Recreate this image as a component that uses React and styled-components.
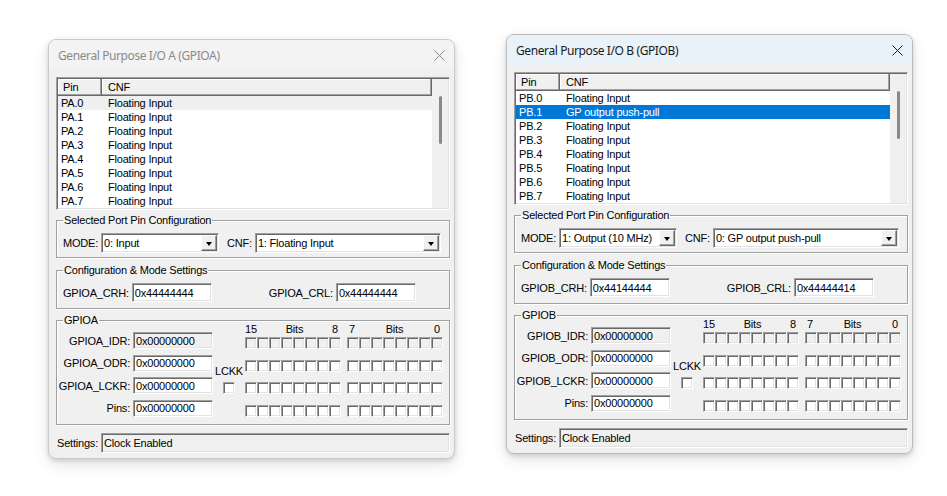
import React from 'react';
import styled, { createGlobalStyle, css } from 'styled-components';

const GlobalStyle = createGlobalStyle`
  html, body {
    margin: 0;
    padding: 0;
    background: #ffffff;
  }
  body {
    width: 947px;
    height: 496px;
    overflow: hidden;
  }
`;

const sunken = css`
  border: 1px solid;
  border-color: #a0a0a0 #ffffff #ffffff #a0a0a0;
  box-shadow: inset 1px 1px 0 #696969, inset -1px -1px 0 #e3e3e3;
`;

const Desktop = styled.div`
  position: relative;
  width: 947px;
  height: 496px;
  background: #ffffff;
  font-family: 'Liberation Sans', Arial, sans-serif;
  font-size: 11px;
  letter-spacing: -0.2px;
  color: #000000;
`;

const Window = styled.div`
  position: absolute;
  left: ${props => props.$x}px;
  top: ${props => props.$y}px;
  width: 407px;
  height: 420px;
  box-sizing: border-box;
  border: 1px solid ${props => (props.$active ? '#bcbcbc' : '#cacaca')};
  border-radius: 8px;
  overflow: hidden;
  background: #f0f0f0;
  display: flex;
  flex-direction: column;
  box-shadow: 0 2px 5px rgba(0, 0, 0, 0.14), 0 6px 16px rgba(0, 0, 0, 0.1);
`;

const TitleBar = styled.div`
  height: 30px;
  flex: none;
  display: flex;
  align-items: center;
  padding-left: 9px;
  background: ${props => (props.$active ? '#e8f2f8' : '#f3f3f3')};
  color: ${props => (props.$active ? '#1b1b1b' : '#8a8a8a')};
`;

const Title = styled.div`
  flex: 1;
  font-family: 'Segoe UI', 'Noto Sans', sans-serif;
  font-size: 12px;
  letter-spacing: -0.4px;
  white-space: nowrap;
`;

const CloseButton = styled.div`
  width: 30px;
  height: 30px;
  display: flex;
  align-items: center;
  justify-content: center;
  color: ${props => (props.$active ? '#1b1b1b' : '#8a8a8a')};
`;

const Client = styled.div`
  flex: 1;
  display: flex;
  flex-direction: column;
  padding: 7px 4px 0 7px;
`;

const ListView = styled.div`
  box-sizing: border-box;
  height: 133px;
  flex: none;
  display: flex;
  background: #ffffff;
  overflow: hidden;
  ${sunken}
  padding: 1px;
`;

const ListMain = styled.div`
  flex: 1;
  display: flex;
  flex-direction: column;
  overflow: hidden;
`;

const ListHeader = styled.div`
  display: flex;
  height: 17px;
  flex: none;
  background: #f0f0f0;
`;

const HeaderCell = styled.div`
  box-sizing: border-box;
  width: ${props => (props.$w ? `${props.$w}px` : 'auto')};
  flex: ${props => (props.$w ? 'none' : '1')};
  padding-left: ${props => props.$pl}px;
  display: flex;
  align-items: center;
  border-right: 1px solid #696969;
  border-bottom: 1px solid #696969;
  box-shadow: inset -1px -1px 0 #a0a0a0, inset 1px 1px 0 #ffffff;
`;

const ListRow = styled.div`
  display: flex;
  align-items: center;
  height: 14px;
  flex: none;
  padding-left: 3px;
  white-space: nowrap;
  ${props =>
    props.$sel === 'focus' &&
    css`
      background: #0078d7;
      color: #ffffff;
    `}
  ${props =>
    props.$sel === 'dim' &&
    css`
      background: #efefef;
    `}
  &:first-of-type {
    margin-top: 2px;
  }
`;

const PinCell = styled.span`
  width: 47px;
  flex: none;
`;

const ScrollBar = styled.div`
  width: 16px;
  flex: none;
  background: #f0f0f0;
  display: flex;
  justify-content: center;
  padding-top: 17px;
`;

const Thumb = styled.div`
  width: 3px;
  height: 48px;
  border-radius: 2px;
  background: #8a8a8a;
`;

const GroupBox = styled.fieldset`
  margin: ${props => props.$mt}px 0 0 0;
  padding: ${props => props.$pad};
  border: 1px solid #a0a0a0;
  box-shadow: inset 1px 1px 0 #ffffff, 1px 1px 0 #ffffff;
  min-width: 0;
`;

const Legend = styled.legend`
  padding: 0 1px;
  font-size: 11px;
  line-height: 13px;
`;

const FieldRow = styled.div`
  display: flex;
  align-items: center;
  gap: ${props => props.$gap || 0}px;
`;

const Label = styled.span`
  white-space: nowrap;
  margin-right: 3px;
  margin-left: ${props => props.$ml || 0}px;
`;

const Combo = styled.div`
  box-sizing: border-box;
  height: 20px;
  width: ${props => (props.$w ? `${props.$w}px` : 'auto')};
  flex: ${props => (props.$w ? 'none' : '1')};
  display: flex;
  align-items: center;
  background: #ffffff;
  ${sunken}
  padding: 1px 1px 1px 2px;
`;

const ComboText = styled.span`
  flex: 1;
  white-space: nowrap;
  overflow: hidden;
`;

const DropButton = styled.div`
  box-sizing: border-box;
  width: 16px;
  height: 16px;
  flex: none;
  background: #f0f0f0;
  border: 1px solid;
  border-color: #ffffff #696969 #696969 #ffffff;
  box-shadow: inset -1px -1px 0 #a0a0a0;
  display: flex;
  align-items: center;
  justify-content: center;
  &::after {
    content: '';
    margin-top: 1px;
    border-left: 3.5px solid transparent;
    border-right: 3.5px solid transparent;
    border-top: 4px solid #000000;
  }
`;

const Edit = styled.div`
  box-sizing: border-box;
  width: 80px;
  height: ${props => props.$h || 19}px;
  flex: none;
  display: flex;
  align-items: center;
  padding-left: 2px;
  white-space: nowrap;
  background: ${props => (props.$readOnly ? '#f0f0f0' : '#ffffff')};
  ${sunken}
`;

const PortBody = styled.div`
  display: flex;
  margin: -5px 0 0 -5px;
`;

const RegColumn = styled.div`
  display: flex;
  flex-direction: column;
  gap: 5.5px;
  padding-top: 10px;
`;

const RegLabel = styled.span`
  width: 72px;
  text-align: right;
  padding-right: 3px;
  white-space: nowrap;
`;

const LockColumn = styled.div`
  width: 33px;
  display: flex;
  flex-direction: column;
  align-items: center;
  padding-top: 43px;
  gap: 4px;
`;

const LockText = styled.span`
  line-height: 13px;
`;

const BitGroups = styled.div`
  display: flex;
  gap: 6px;
`;

const BitGroup = styled.div`
  display: flex;
  flex-direction: column;
  gap: 10.5px;
  width: 96px;
`;

const BitHeader = styled.div`
  height: 15px;
  margin-bottom: -10.5px;
  display: flex;
  justify-content: space-between;
  align-items: center;
  padding: 0 3px 0 ${props => props.$pl}px;
  line-height: 13px;
`;

const BitRow = styled.div`
  display: flex;
`;

const Box = styled.div`
  box-sizing: border-box;
  width: 12px;
  height: 12px;
  flex: none;
  background: ${props => (props.$readOnly ? '#f0f0f0' : '#ffffff')};
  ${sunken}
`;

const StatusRow = styled.div`
  display: flex;
  align-items: center;
  margin-top: 8px;
  padding-left: 1px;
`;

const StatusField = styled.div`
  box-sizing: border-box;
  flex: 1;
  height: 20px;
  display: flex;
  align-items: center;
  padding-left: 2px;
  ${sunken}
`;

function BitBoxes({ readOnly }) {
  return (
    <BitRow>
      {Array.from({ length: 8 }, (_, i) => (
        <Box key={i} $readOnly={readOnly} />
      ))}
    </BitRow>
  );
}

function Dialog({ port, x, y, active, pins, selected, mode, cnf, crh, crl }) {
  const name = `GPIO${port}`;
  const regs = [
    { label: `${name}_IDR:`, readOnly: true },
    { label: `${name}_ODR:` },
    { label: `${name}_LCKR:` },
    { label: 'Pins:' },
  ];

  return (
    <Window $x={x} $y={y} $active={active}>
      <TitleBar $active={active}>
        <Title>
          General Purpose I/O {port} ({name})
        </Title>
        <CloseButton $active={active}>
          <svg width="11" height="11" viewBox="0 0 11 11">
            <path d="M0.5 0.5 L10.5 10.5 M10.5 0.5 L0.5 10.5" stroke="currentColor" strokeWidth="1" fill="none" />
          </svg>
        </CloseButton>
      </TitleBar>
      <Client>
        <ListView>
          <ListMain>
            <ListHeader>
              <HeaderCell $w={44} $pl={5}>
                Pin
              </HeaderCell>
              <HeaderCell $pl={6}>CNF</HeaderCell>
            </ListHeader>
            {pins.map((text, i) => (
              <ListRow key={i} $sel={i === selected ? (active ? 'focus' : 'dim') : null}>
                <PinCell>
                  P{port}.{i}
                </PinCell>
                <span>{text}</span>
              </ListRow>
            ))}
          </ListMain>
          <ScrollBar>
            <Thumb />
          </ScrollBar>
        </ListView>

        <GroupBox $mt={4} $pad="6px 8px 4px 6px">
          <Legend>Selected Port Pin Configuration</Legend>
          <FieldRow>
            <Label>MODE:</Label>
            <Combo $w={118}>
              <ComboText>{mode}</ComboText>
              <DropButton />
            </Combo>
            <Label $ml={8}>CNF:</Label>
            <Combo>
              <ComboText>{cnf}</ComboText>
              <DropButton />
            </Combo>
          </FieldRow>
        </GroupBox>

        <GroupBox $mt={6} $pad="6px 8px 6px 6px">
          <Legend>Configuration &amp; Mode Settings</Legend>
          <FieldRow>
            <Label>{name}_CRH:</Label>
            <Edit>{crh}</Edit>
            <Label $ml={57}>{name}_CRL:</Label>
            <Edit>{crl}</Edit>
          </FieldRow>
        </GroupBox>

        <GroupBox $mt={5} $pad="0 6px 7px 6px">
          <Legend>{name}</Legend>
          <PortBody>
            <RegColumn>
              {regs.map(reg => (
                <FieldRow key={reg.label}>
                  <RegLabel>{reg.label}</RegLabel>
                  <Edit $h={17} $readOnly={reg.readOnly}>
                    0x00000000
                  </Edit>
                </FieldRow>
              ))}
            </RegColumn>
            <LockColumn>
              <LockText>LCKK</LockText>
              <Box />
            </LockColumn>
            <BitGroups>
              <BitGroup>
                <BitHeader $pl={0}>
                  <span>15</span>
                  <span>Bits</span>
                  <span>8</span>
                </BitHeader>
                {regs.map(reg => (
                  <BitBoxes key={reg.label} readOnly={reg.readOnly} />
                ))}
              </BitGroup>
              <BitGroup>
                <BitHeader $pl={2}>
                  <span>7</span>
                  <span>Bits</span>
                  <span>0</span>
                </BitHeader>
                {regs.map(reg => (
                  <BitBoxes key={reg.label} readOnly={reg.readOnly} />
                ))}
              </BitGroup>
            </BitGroups>
          </PortBody>
        </GroupBox>

        <StatusRow>
          <Label>Settings:</Label>
          <StatusField>Clock Enabled</StatusField>
        </StatusRow>
      </Client>
    </Window>
  );
}

const floating = Array.from({ length: 8 }, () => 'Floating Input');
const portB = floating.map((t, i) => (i === 1 ? 'GP output push-pull' : t));

export default function App() {
  return (
    <>
      <GlobalStyle />
      <Desktop>
        <Dialog
          port="A"
          x={48}
          y={39}
          active={false}
          pins={floating}
          selected={0}
          mode="0: Input"
          cnf="1: Floating Input"
          crh="0x44444444"
          crl="0x44444444"
        />
        <Dialog
          port="B"
          x={506}
          y={34}
          active
          pins={portB}
          selected={1}
          mode="1: Output (10 MHz)"
          cnf="0: GP output push-pull"
          crh="0x44144444"
          crl="0x44444414"
        />
      </Desktop>
    </>
  );
}
